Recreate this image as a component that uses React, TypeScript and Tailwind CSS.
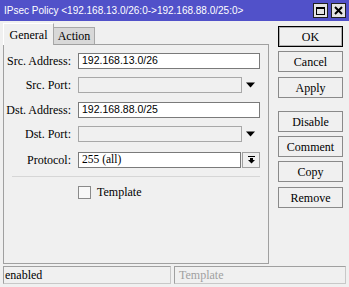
import React from "react";

const serif = "font-['Liberation_Serif',serif]";
const sans = "font-['Liberation_Sans',Arial,sans-serif]";

const buttons = [
  { label: "OK", mt: "mt-0", primary: true },
  { label: "Cancel", mt: "mt-[4px]" },
  { label: "Apply", mt: "mt-[5px]" },
  { label: "Disable", mt: "mt-[13px]" },
  { label: "Comment", mt: "mt-[4px]" },
  { label: "Copy", mt: "mt-[4px]" },
  { label: "Remove", mt: "mt-[5px]" },
];

function DropArrow() {
  return (
    <svg width="9" height="6" viewBox="0 0 9 6" className="ml-[4px]">
      <polygon points="0,0.5 9,0.5 4.5,5.5" fill="#000" />
    </svg>
  );
}

function Row({
  label,
  mt,
  children,
}: {
  label: string;
  mt: string;
  children: React.ReactNode;
}) {
  return (
    <div className={`flex items-center h-[16px] ${mt}`}>
      <div className={`w-[67px] text-right text-[12px] leading-none text-black ${serif}`}>{label}</div>
      <div className="ml-[7px] flex items-center">{children}</div>
    </div>
  );
}

export default function App() {
  return (
    <div className="w-[349px] h-[287px] bg-[#f0f0f0] flex flex-col overflow-hidden select-none">
      {/* Title bar */}
      <div className="h-[21px] bg-[#5151c9] flex items-center pl-[4px] pr-[3px]">
        <span className={`text-white text-[10px] leading-none ${sans}`}>
          IPsec Policy &lt;192.168.13.0/26:0-&gt;192.168.88.0/25:0&gt;
        </span>
        <div className="ml-auto flex gap-[3px]">
          <div className="w-[15px] h-[15px] bg-[#e4e4e4] border border-[#202020] flex items-center justify-center">
            <div className="w-[9px] h-[8px] border border-black border-t-2" />
          </div>
          <div className="w-[15px] h-[15px] bg-[#e4e4e4] border border-[#202020] flex items-center justify-center">
            <svg width="9" height="9" viewBox="0 0 9 9">
              <path d="M1 1 L8 8 M8 1 L1 8" stroke="#000" strokeWidth="2" />
            </svg>
          </div>
        </div>
      </div>

      <div className="flex pl-[3px]">
        {/* Left: tabs + panel */}
        <div className="w-[266px] pt-[2px] flex flex-col">
          <div className="flex items-end h-[21px] relative z-10">
            <div className={`h-[22px] w-[51px] -mb-px bg-[#f0f0f0] border border-b-0 border-[#a8a8a8] border-t-white border-l-white flex items-center justify-center text-[12px] text-black ${serif}`}>
              General
            </div>
            <div className={`h-[17px] w-[41px] bg-[#d8d8d8] border border-b-0 border-l-0 border-[#a8a8a8] flex items-center justify-center text-[12px] text-black ${serif}`}>
              Action
            </div>
          </div>
          <div className="h-[220px] border border-[#a0a0a0] pt-[8px]">
            <Row label="Src. Address:" mt="mt-0">
              <div className={`w-[182px] h-[16px] bg-white border border-[#7a7a7a] flex items-center pl-[3px] text-[10.5px] text-black ${sans}`}>
                192.168.13.0/26
              </div>
            </Row>
            <Row label="Src. Port:" mt="mt-[8px]">
              <div className="w-[164px] h-[16px] bg-[#f0f0f0] border border-[#a8a8a8]" />
              <DropArrow />
            </Row>
            <Row label="Dst. Address:" mt="mt-[9px]">
              <div className={`w-[182px] h-[16px] bg-white border border-[#7a7a7a] flex items-center pl-[3px] text-[10.5px] text-black ${sans}`}>
                192.168.88.0/25
              </div>
            </Row>
            <Row label="Dst. Port:" mt="mt-[8px]">
              <div className="w-[164px] h-[16px] bg-[#f0f0f0] border border-[#a8a8a8]" />
              <DropArrow />
            </Row>
            <Row label="Protocol:" mt="mt-[10px]">
              <div className={`w-[163px] h-[16px] bg-white border border-[#7a7a7a] flex items-center pl-[3px] text-[11.5px] text-black ${serif}`}>
                255 (all)
              </div>
              <div className="w-[18px] h-[16px] ml-px bg-[#f0f0f0] border border-[#a0a0a0] flex items-center justify-center">
                <svg width="7" height="8" viewBox="0 0 7 8">
                  <rect x="0" y="0" width="7" height="1" fill="#000" />
                  <rect x="2" y="2" width="3" height="2" fill="#000" />
                  <polygon points="0,4 7,4 3.5,7.5" fill="#000" />
                </svg>
              </div>
            </Row>
            <div className="mx-[8px] mt-[8px] h-px bg-[#d6d6d6]" />
            <div className="flex items-center mt-[6px] pl-[74px]">
              <div className="w-[13px] h-[13px] bg-[#f8f8f8] border border-[#8a8a8a]" />
              <span className={`ml-[6px] text-[12px] text-black ${serif}`}>Template</span>
            </div>
          </div>
        </div>

        {/* Right: buttons */}
        <div className="ml-[9px] pt-[5px] flex flex-col">
          {buttons.map((b) => (
            <div
              key={b.label}
              className={`${b.mt} w-[65px] h-[21px] flex items-center justify-center bg-[#f0f0f0] text-[12px] text-black ${serif} ${
                b.primary ? "border border-black shadow-[inset_0_0_0_1px_#b0b0b0]" : "border border-[#8a8a8a]"
              }`}
            >
              {b.label}
            </div>
          ))}
        </div>
      </div>

      {/* Status bar */}
      <div className="flex gap-[3px] px-[3px] mt-[2px]">
        <div className={`w-[168px] h-[18px] border border-[#c8c8c8] border-t-[#a0a0a0] border-l-[#a0a0a0] flex items-center pl-[1px] text-[12px] text-black ${serif}`}>
          enabled
        </div>
        <div className={`w-[172px] h-[18px] border border-[#c8c8c8] border-t-[#a0a0a0] border-l-[#a0a0a0] flex items-center pl-[4px] text-[12px] text-[#a0a0a0] ${serif}`}>
          Template
        </div>
      </div>
    </div>
  );
}
